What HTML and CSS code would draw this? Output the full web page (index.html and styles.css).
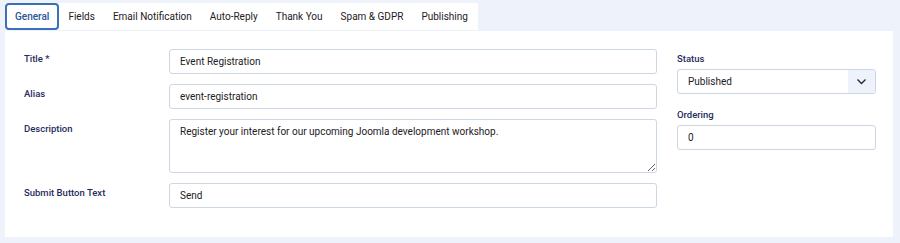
FILE: index.html
```html
<!DOCTYPE html>
<html lang="en">
<head>
	<meta charset="UTF-8">
	<title>Edit Form</title>
	<link rel="stylesheet" href="styles.css">
</head>
<body>
	<div class="tabs">
		<div class="tab active">General</div>
		<div class="tab">Fields</div>
		<div class="tab">Email Notification</div>
		<div class="tab">Auto-Reply</div>
		<div class="tab">Thank You</div>
		<div class="tab">Spam &amp; GDPR</div>
		<div class="tab">Publishing</div>
	</div>
	<div class="card">
		<div class="main">
			<div class="row">
				<label for="title">Title *</label>
				<input type="text" id="title" value="Event Registration">
			</div>
			<div class="row">
				<label for="alias">Alias</label>
				<input type="text" id="alias" value="event-registration">
			</div>
			<div class="row">
				<label for="desc">Description</label>
				<textarea id="desc">Register your interest for our upcoming Joomla development workshop.</textarea>
			</div>
			<div class="row">
				<label for="submit">Submit Button Text</label>
				<input type="text" id="submit" value="Send">
			</div>
		</div>
		<div class="side">
			<div class="field">
				<label for="status">Status</label>
				<div class="select">
					<span>Published</span>
					<span class="caret">
						<svg width="11" height="7" viewBox="0 0 11 7"><path d="M1.5 1.5 L5.5 5.5 L9.5 1.5" fill="none" stroke="#1f2937" stroke-width="1.3"/></svg>
					</span>
				</div>
			</div>
			<div class="field">
				<label for="ordering">Ordering</label>
				<input type="text" id="ordering" value="0">
			</div>
		</div>
	</div>
</body>
</html>
```

FILE: styles.css
```css
html {
	background-color: #eef2fa;
}
body {
	margin: 0;
	padding: 3px 7px 6px 5px;
	font-family: Roboto, "Liberation Sans", sans-serif;
	font-size: 10px;
	color: #1d2024;
}
.tabs {
	display: inline-flex;
	background-color: #fff;
	padding-right: 1px;
}
.tab {
	height: 27px;
	line-height: 27px;
	padding: 0 9px;
	box-sizing: border-box;
}
.tab.active {
	border: 2px solid #3b6fb6;
	border-radius: 4px;
	line-height: 23px;
	padding: 0 8px;
	color: #2a5597;
	font-weight: 500;
}
.card {
	margin-top: 1px;
	background-color: #fff;
	display: grid;
	grid-template-columns: 633px 199px;
	gap: 20px;
	padding: 18px 17px 29px 19px;
}
.main {
	display: grid;
	grid-template-columns: 145px 488px;
	row-gap: 10px;
}
.row {
	display: contents;
}
label {
	display: block;
	color: #1f2d5c;
	font-weight: 500;
	font-size: 9.5px;
}
input, textarea, .select {
	box-sizing: border-box;
	height: 25px;
	width: 100%;
	margin: 0;
	border: 1px solid #cdd6e3;
	border-radius: 3px;
	padding: 0 10px;
	font-family: inherit;
	font-size: 10px;
	color: #1d2024;
	background-color: #fff;
}
textarea {
	height: 54px;
	padding-top: 6px;
	resize: vertical;
}
.main label {
	padding-top: 4px;
}
.field {
	margin-bottom: 11px;
}
.field label {
	line-height: 20px;
}
.select {
	display: flex;
	align-items: center;
	padding: 0 0 0 10px;
}
.select span:first-child {
	flex: 1;
}
.caret {
	width: 27px;
	height: 100%;
	background-color: #eef2fa;
	display: flex;
	align-items: center;
	justify-content: center;
	border-radius: 0 3px 3px 0;
}
```
